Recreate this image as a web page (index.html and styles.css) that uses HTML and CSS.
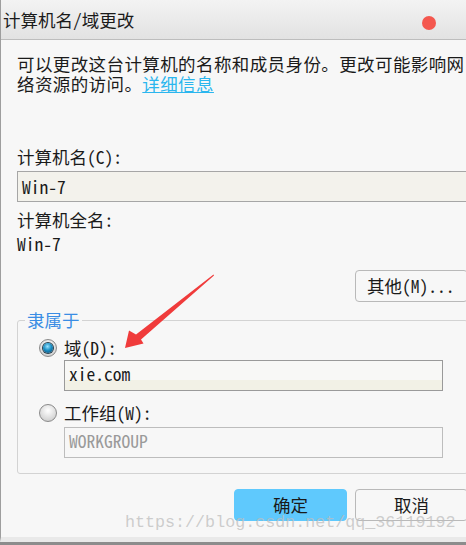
FILE: index.html
```html
<!DOCTYPE html>
<html lang="zh-CN">
<head>
    <meta charset="UTF-8">
    <title>计算机名/域更改</title>
    <link rel="stylesheet" href="styles.css">
</head>
<body>

    <div class="window">
        <div class="titlebar">
            <span class="title">计算机名/域更改</span>
            <span class="close-dot"></span>
        </div>

        <div class="content">
            <p class="desc">可以更改这台计算机的名称和成员身份。更改可能影响网<br>络资源的访问。<a href="#" class="link">详细信息</a></p>

            <label class="label label-name">计算机名(C):</label>
            <div class="textbox">Win-7</div>

            <div class="label label-full">计算机全名:</div>
            <div class="value">Win-7</div>

            <div class="row-right">
                <button class="btn btn-more">其他(M)...</button>
            </div>

            <fieldset class="group">
                <legend>隶属于</legend>

                <div class="radio-row">
                    <span class="radio checked"></span>
                    <span>域(D):</span>
                </div>
                <div class="textbox small active">xie.com</div>

                <div class="radio-row second">
                    <span class="radio"></span>
                    <span>工作组(W):</span>
                </div>
                <div class="textbox small disabled">WORKGROUP</div>
            </fieldset>

            <div class="actions">
                <button class="btn btn-ok">确定</button>
                <button class="btn">取消</button>
            </div>
        </div>

        <!-- flèche rouge d'annotation -->
        <svg class="arrow" width="466" height="545" viewBox="0 0 466 545">
            <polygon points="213.5,274.5 214,275.5 141,339.5 143.5,343.5 125,348 129,330.5 136,334.5" fill="#f03b3b"/>
        </svg>

        <div class="watermark">https://blog.csdn.net/qq_36119192</div>
    </div>

</body>
</html>
```

FILE: styles.css
```css
/* Couleurs */
:root {
    --bg: #f7f7f7;
    --text: #1a1a1a;
    --border: #b9b9b9;
    --field-border: #a6a6a6;
    --blue: #3a8de4;
    --link: #2bb6ee;
    --ok: #5fc9fd;
}

* {
    box-sizing: border-box;
    margin: 0;
    padding: 0;
}

body {
    background: #8c8c8c;
    width: 466px;
    height: 545px;
    overflow: hidden;
    font-family: "Noto Sans Mono CJK SC", "Noto Sans CJK SC", monospace;
    font-size: 17.5px;
    line-height: 20px;
    color: var(--text);
}

.window {
    position: relative;
    width: 490px;
    height: 542px;
    background: var(--bg);
    border-left: 1px solid #9e9e9e;
    border-bottom: 5px solid #e9e9e9;
}

.titlebar {
    height: 40px;
    display: flex;
    align-items: center;
    padding-left: 2px;
    background: linear-gradient(#f3f3f3, #e2e2e2);
    border-bottom: 1px solid #bdbdbd;
}

.close-dot {
    width: 14px;
    height: 14px;
    border-radius: 50%;
    background: #f4574e;
    margin-left: auto;
    margin-right: 54px;
    align-self: flex-start;
    margin-top: 16px;
}

.content {
    padding: 14px 22px 0 16px;
}

.desc {
    white-space: nowrap;
    letter-spacing: 0.4px;
}

.link {
    color: var(--link);
    text-decoration: underline;
}

.label {
    display: block;
}

.label-name {
    margin-top: 53px;
}

.textbox {
    margin-top: 4px;
    height: 31px;
    padding: 5px 4px 0;
    border: 1px solid var(--field-border);
    background: #f3f2ec;
}

.label-full {
    margin-top: 8px;
}

.value {
    margin-top: 4px;
}

.row-right {
    display: flex;
    justify-content: flex-end;
    margin-top: 16px;
}

.btn {
    width: 113px;
    height: 32px;
    font: inherit;
    color: var(--text);
    background: var(--bg);
    border: 1px solid var(--border);
    border-radius: 4px;
}

.btn-more {
    text-align: left;
    padding-left: 11px;
}

.group {
    margin-top: 8px;
    border: 1px solid #d3d3d3;
    border-radius: 3px;
    padding: 8px 0 15px 21px;
}

.group legend {
    color: var(--blue);
    margin-left: -14px;
    padding: 0 2px;
}

.radio-row {
    display: flex;
    align-items: center;
    gap: 7px;
    height: 20px;
}

.radio-row.second {
    margin-top: 12px;
}

.radio {
    width: 18px;
    height: 18px;
    border-radius: 50%;
    border: 1px solid #8a8a8a;
    background: radial-gradient(circle at 50% 35%, #ffffff, #d6d6d6 70%, #bdbdbd);
    display: flex;
    align-items: center;
    justify-content: center;
}

.radio.checked::after {
    content: "";
    width: 10px;
    height: 10px;
    border-radius: 50%;
    background: radial-gradient(circle at 45% 35%, #9be3ff, #1a8fc4 45%, #0a3f66);
    box-shadow: 0 0 0 1px #27404f;
}

.textbox.small {
    margin-left: 25px;
    width: 379px;
    margin-top: 2px;
    padding-top: 3px;
}

.textbox.active {
    border-color: #9a9a9a;
    background: linear-gradient(#f8f8f6 64%, #f2f1e6 64%);
}

.textbox.disabled {
    margin-top: 4px;
    border-color: #bdbdbd;
    background: var(--bg);
    color: #9a9a9a;
}

.actions {
    display: flex;
    justify-content: flex-end;
    gap: 8px;
    margin-top: 15px;
}

.btn-ok {
    background: var(--ok);
    border-color: var(--ok);
}

/* Superpositions */
.arrow {
    position: absolute;
    left: -1px;
    top: 0;
    pointer-events: none;
}

.watermark {
    position: absolute;
    left: 124px;
    top: 513px;
    font-family: "Liberation Mono", monospace;
    font-size: 16.7px;
    color: rgba(190, 190, 190, 0.75);
    pointer-events: none;
}
```
